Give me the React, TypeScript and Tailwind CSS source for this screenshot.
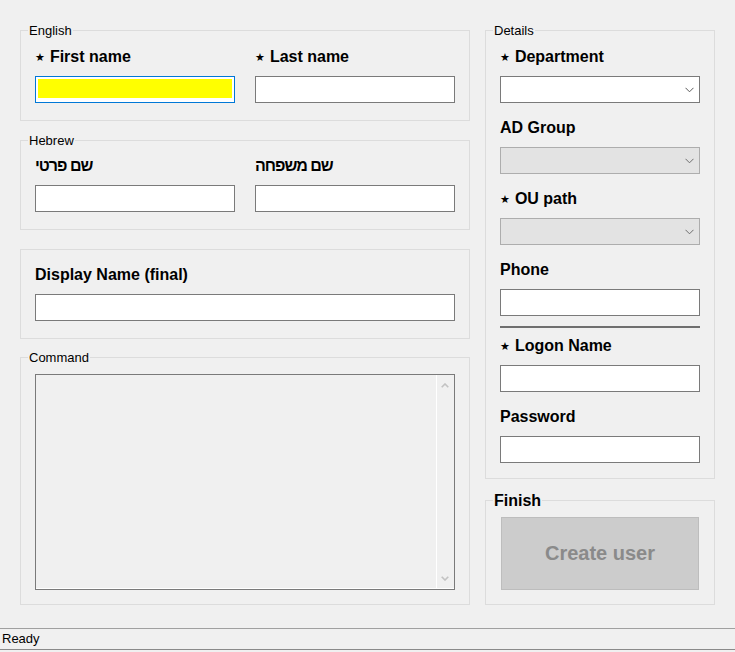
import React from "react";

const font = "font-['Liberation_Sans',Arial,sans-serif]";

function Star() {
  return (
    <span className="font-['DejaVu_Sans',sans-serif] text-[11px] leading-none mr-[5px] -translate-y-[1px]">
      ★
    </span>
  );
}

function Label({ text, star, hebrew }: { text: string; star?: boolean; hebrew?: boolean }) {
  return (
    <div className="flex items-baseline h-[20px] text-[16px] leading-[20px] font-bold text-black">
      {star && <Star />}
      <span dir="auto" className={hebrew ? "tracking-[-1px]" : ""}>
        {text}
      </span>
    </div>
  );
}

function TextBox() {
  return <div className="mt-[9px] h-[27px] w-full border border-[#7a7a7a] bg-white" />;
}

function Chevron({ color }: { color: string }) {
  return (
    <svg width="9" height="6" viewBox="0 0 9 6" fill="none">
      <polyline points="0.5,0.8 4.5,4.8 8.5,0.8" stroke={color} strokeWidth="1" />
    </svg>
  );
}

function Combo({ disabled }: { disabled?: boolean }) {
  return (
    <div
      className={
        disabled
          ? "mt-[9px] h-[27px] w-full border border-[#adadad] bg-[#e3e3e3] flex items-center justify-end pr-[5px]"
          : "mt-[9px] h-[27px] w-full border border-[#7a7a7a] bg-white flex items-center justify-end pr-[5px]"
      }
    >
      <Chevron color={disabled ? "#6d6d6d" : "#5a5a5a"} />
    </div>
  );
}

function Field({
  label,
  star,
  hebrew,
  children,
  className,
}: {
  label: string;
  star?: boolean;
  hebrew?: boolean;
  children: React.ReactNode;
  className?: string;
}) {
  return (
    <div className={className}>
      <Label text={label} star={star} hebrew={hebrew} />
      {children}
    </div>
  );
}

function Legend({ children }: { children: React.ReactNode }) {
  return <legend className="px-[1px] text-[13px] leading-[15px] text-black">{children}</legend>;
}

export default function App() {
  return (
    <div className={`${font} w-[735px] h-[652px] bg-[#f0f0f0] flex flex-col text-black`}>
      <div className="flex gap-[15px] pt-[23px] pl-[20px]">
        {/* left column */}
        <div className="flex flex-col w-[450px]">
          <fieldset className="h-[98px] border border-[#dcdcdc] px-[7px]">
            <Legend>English</Legend>
            <div className="flex gap-[20px] px-[7px] pt-[9px]">
              <Field label="First name" star className="w-[200px]">
                <div className="mt-[9px] h-[27px] w-full border border-[#0078d7] bg-white pt-[2px] px-[2px] pb-[4px]">
                  <div className="h-full w-full bg-[#ffff00]" />
                </div>
              </Field>
              <Field label="Last name" star className="w-[200px]">
                <TextBox />
              </Field>
            </div>
          </fieldset>

          <fieldset className="mt-[12px] h-[97px] border border-[#dcdcdc] px-[7px]">
            <Legend>Hebrew</Legend>
            <div className="flex gap-[20px] px-[7px] pt-[8px]">
              <Field label="שם פרטי" hebrew className="w-[200px]">
                <TextBox />
              </Field>
              <Field label="שם משפחה" hebrew className="w-[200px]">
                <TextBox />
              </Field>
            </div>
          </fieldset>

          <div className="mt-[19px] h-[90px] border border-[#dcdcdc] px-[14px] pt-[15px]">
            <Field label="Display Name (final)">
              <TextBox />
            </Field>
          </div>

          <fieldset className="mt-[11px] h-[255px] border border-[#dcdcdc] px-[7px]">
            <Legend>Command</Legend>
            <div className="px-[7px] pt-[9px]">
              <div className="h-[216px] border border-[#7a7a7a] bg-[#f0f0f0] flex">
                <div className="flex-1 border-b border-white" />
                <div className="w-[18px] border-l border-b border-white flex flex-col items-center justify-between pt-[8px] pb-[7px] pr-[1px]">
                  <svg width="8" height="5" viewBox="0 0 8 5" fill="none">
                    <polyline points="0.7,4.3 4,1 7.3,4.3" stroke="#c2c2c2" strokeWidth="1.6" />
                  </svg>
                  <svg width="8" height="5" viewBox="0 0 8 5" fill="none">
                    <polyline points="0.7,0.7 4,4 7.3,0.7" stroke="#c2c2c2" strokeWidth="1.6" />
                  </svg>
                </div>
              </div>
            </div>
          </fieldset>
        </div>

        {/* right column */}
        <div className="flex flex-col w-[230px]">
          <fieldset className="h-[456px] border border-[#dcdcdc] px-[7px]">
            <Legend>Details</Legend>
            <div className="px-[7px] pt-[9px]">
              <Field label="Department" star>
                <Combo />
              </Field>
              <Field label="AD Group" className="mt-[15px]">
                <Combo disabled />
              </Field>
              <Field label="OU path" star className="mt-[15px]">
                <Combo disabled />
              </Field>
              <Field label="Phone" className="mt-[15px]">
                <TextBox />
              </Field>
              <div className="mt-[10px] h-[2px] bg-[#6f6f6f]" />
              <Field label="Logon Name" star className="mt-[8px]">
                <TextBox />
              </Field>
              <Field label="Password" className="mt-[15px]">
                <TextBox />
              </Field>
            </div>
          </fieldset>

          <fieldset className="mt-[12px] h-[114px] border border-[#dcdcdc] px-[7px]">
            <legend className="px-[1px] text-[16px] leading-[19px] font-bold">Finish</legend>
            <div className="px-[8px] pt-[7px]">
              <button
                disabled
                className="w-[198px] h-[73px] bg-[#cccccc] border border-[#bdbdbd] text-[20px] leading-[20px] font-bold text-[#8a8a8a] pb-[1px]"
              >
                Create user
              </button>
            </div>
          </fieldset>
        </div>
      </div>

      <div className="mt-auto mb-[2px] h-[22px] border-t border-b border-t-[#a0a0a0] border-b-[#8a8a8a] pl-[2px] text-[13px] leading-[20px]">
        Ready
      </div>
    </div>
  );
}
